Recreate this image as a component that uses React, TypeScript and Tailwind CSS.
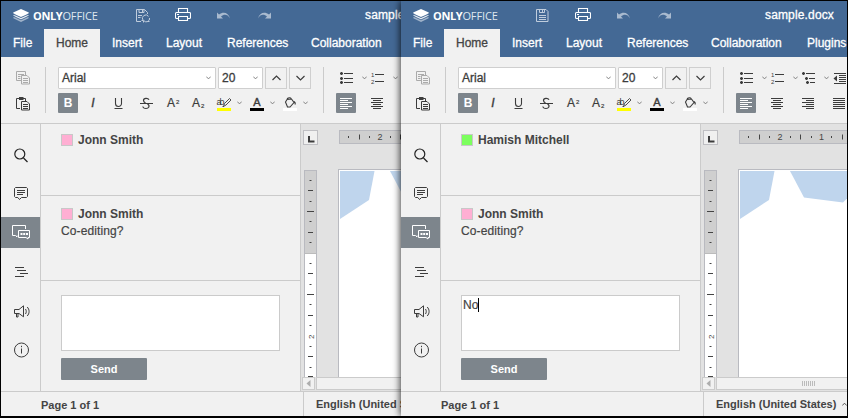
import type { ReactNode } from "react";

function Svg({ w, h, className = "", children }: { w: number; h: number; className?: string; children: ReactNode }) {
  return (
    <svg width={w} height={h} viewBox={`0 0 ${w} ${h}`} fill="none" stroke="currentColor" className={`block shrink-0 ${className}`}>
      {children}
    </svg>
  );
}

const Caret = () => (
  <Svg w={5} h={4} className="text-[#777]">
    <path d="M.3.6 2.5 2.9 4.7.6" strokeWidth=".9" />
  </Svg>
);

function Logo() {
  return (
    <div className="ml-3 flex w-[87px] shrink-0 items-center gap-1">
      <Svg w={16} h={13}>
        <g stroke="none" fill="#fff">
          <path d="M8 4.5 15.6 8.3v1L8 12.9.4 9.3v-1z" opacity=".5" />
          <path d="M8 3 15.6 5.9v.9L8 10.2.4 6.8v-.9z" opacity=".75" />
          <path d="M8 5 15.8 3.6v.7L8 7.9.2 4.3v-.7z" />
          <path d="M8 0 15.8 3.6 8 7.2.2 3.6z" />
          <path d="M.4 4.7 8 8.1l7.6-3.4v.8L8 8.9.4 5.5zM.4 7.1 8 10.5l7.6-3.4v.7L8 11.2.4 7.8z" fill="#446995" />
        </g>
      </Svg>
      <div className="whitespace-nowrap font-['Open_Sans',sans-serif] text-[11px] leading-[13px] tracking-[-0.1px] text-white [-webkit-text-stroke:0px]">
        <span className="font-bold tracking-[-0.35px]">ONLY</span>
        <span className="text-[#dfe7f0]">OFFICE</span>
      </div>
    </div>
  );
}

function SaveIcon({ sync }: { sync: boolean }) {
  return (
    <Svg w={16} h={15} className="text-[#c0cddd]">
      {sync ? (
        <>
          <path d="M6 13.5H1.5V1.5h8l3 3V6M4 1.5v3h5v-3M7.5 2v2M3 7.5h4M3 9.5h2.500" />
          <path d="M8 12.200A3.200 3.200 0 0 1 13.500 8.400M14.500 10a3.200 3.200 0 0 1-5.500 2.800M12.500 13.500h2M8.500 14.500v-2h-2" />
        </>
      ) : (
        <>
          <path d="M1.500 1.500h9.500l2 2v10h-11.500zM4.500 1.500v3h5v-3M4 7.500h7M4 9.500h7M4 11.500h7" />
          <path d="M7.500 2v2" />
        </>
      )}
    </Svg>
  );
}

const PrintIcon = () => (
  <Svg w={16} h={14} className="text-white">
    <path d="M3.500 4V.5h9V4M3 10.500H1.500a1 1 0 0 1-1-1v-4a1 1 0 0 1 1-1h13a1 1 0 0 1 1 1v4a1 1 0 0 1-1 1H13M3.500 8.500h9v4h-9zM2 6.500h2" strokeWidth="1.100" />
  </Svg>
);

const UndoIcon = ({ flip = false }: { flip?: boolean }) => (
  <Svg w={14} h={8} className={flip ? "-scale-x-100 text-[#a9bacf]" : "text-[#a9bacf]"}>
    <path d="M0 .5v6h6L4 4.500C7 2 10.500 2 13 6.500 11.500.8 6.500-.8 2 2.500z" fill="currentColor" stroke="none" />
  </Svg>
);

const CopyIcon = () => (
  <Svg w={15} h={14} className="text-[#aaa]">
    <path d="M5 9.500H.5v-9h9V4M2 3.500h6M2 5.500h2.500M2 7.500h2.500" />
    <path d="M5.500 4.500h5.500l2.500 2.500v6h-8zM7 7.500h5M7 9.500h5M7 11.500h5" />
  </Svg>
);

const PasteIcon = () => (
  <Svg w={15} h={14} className="text-[#3c3c3c]">
    <path d="M4 11.500H.5v-10h9V4M5.500 4.500h5.500l2.500 2.500v6h-8zM7 7.500h5M7 9.500h5M7 11.500h5" />
    <path d="M3 1.500h4.500" strokeWidth="3" />
  </Svg>
);

const Bullets = () => (
  <Svg w={13} h={13} className="text-[#3c3c3c]">
    <path d="M4 1.500h9M4 6.500h9M4 10.500h9" />
    <path d="M0 1.500h3M0 6.500h3M0 10.500h3M1.500 0v3M1.500 5v3M1.500 9v3" strokeWidth="1.600" />
  </Svg>
);

const Numbers = () => (
  <Svg w={13} h={13} className="text-[#3c3c3c]">
    <path d="M4 2.500h9M4 9.500h9" />
    <g fill="currentColor" stroke="none" fontFamily="Liberation Sans, sans-serif" fontSize="6">
      <text x="0" y="5">1</text>
      <text x="0" y="12">2</text>
    </g>
  </Svg>
);

const Multilevel = () => (
  <Svg w={13} h={13} className="text-[#3c3c3c]">
    <path d="M4 1.500h9M7 6.500h6M8 10.500h5" />
    <path d="M0 1.500h3M1.500 0v3M3 6.500h3M4.500 5v3M4 10.500h3M5.500 9v3" strokeWidth="1.500" />
  </Svg>
);

const Outdent = () => (
  <Svg w={13} h={13} className="text-[#3c3c3c]">
    <path d="M1 1.500h12M6 3.500h7M6 5.500h7M6 7.500h7M6 9.500h7M1 11.500h12" />
    <path d="M4 3.500v6L.5 6.500z" fill="currentColor" stroke="none" />
  </Svg>
);

function Lines({ d, className }: { d: string; className: string }) {
  return (
    <Svg w={12} h={12} className={className}>
      <path d={d} />
    </Svg>
  );
}

function Toolbar() {
  return (
    <div className="flex h-[66px] shrink-0 items-start pl-[15px] pt-[10px] text-[#3c3c3c]">
      <div className="flex w-[14px] shrink-0 flex-col gap-[12px] pt-1">
        <CopyIcon />
        <PasteIcon />
      </div>
      <div className="ml-[15px] h-[46px] w-px shrink-0 bg-[#cbcbcb]" />
      <div className="ml-[12px] flex w-[253px] shrink-0 flex-col gap-1">
        <div className="flex h-[22px] gap-[2px] text-[12px] [-webkit-text-stroke:0.3px]">
          <div className="flex w-[158px] items-center justify-between rounded-[1px] border border-[#cfcfcf] bg-white pl-[3px] pr-1">
            <span>Arial</span>
            <Caret />
          </div>
          <div className="flex w-[45px] items-center justify-between rounded-[1px] border border-[#cfcfcf] bg-white pl-[3px] pr-1">
            <span>20</span>
            <Caret />
          </div>
          <div className="flex w-[22px] items-center justify-center border border-[#cfcfcf]">
            <Svg w={9} h={6}><path d="M.5 5 4.500 1l4 4" strokeWidth="1.200" /></Svg>
          </div>
          <div className="flex w-[22px] items-center justify-center border border-[#cfcfcf]">
            <Svg w={9} h={6}><path d="M.5 1l4 4 4-4" strokeWidth="1.200" /></Svg>
          </div>
        </div>
        <div className="flex h-5 items-center text-[12px] leading-5">
          <div className="w-5 rounded-[1px] bg-[#7d858c] text-center font-bold text-white">B</div>
          <div className="ml-[5px] w-5 text-center italic [-webkit-text-stroke:0.4px]">I</div>
          <Svg w={20} h={20} className="ml-[6px]">
            <path d="M6.500 5v5.500a3 3 0 0 0 6 0V5M5.500 15.500h8" strokeWidth="1.100" />
          </Svg>
          <Svg w={20} h={20} className="ml-[7px]">
            <path d="M13 6.800C12 4.800 7.500 4.800 7.500 7.500c0 1 .5 1.700 2 2.500M11.500 11c3 2 1 4.500-1.500 4.500-2 0-3-1-3.200-2M4 10.500h13" strokeWidth="1.200" />
          </Svg>
          <div className="ml-[6px] w-5 pl-[5px] [-webkit-text-stroke:0.2px]">A<span className="ml-px inline-block -translate-y-[3px] text-[6px] leading-none">2</span></div>
          <div className="ml-[6px] w-5 pl-[4px] [-webkit-text-stroke:0.2px]">A<span className="ml-px inline-block translate-y-[1px] text-[6px] leading-none">2</span></div>
          <Svg w={20} h={20} className="ml-[6px]">
            <text x="2.500" y="12" fill="currentColor" stroke="none" fontSize="9" fontFamily="Liberation Sans, sans-serif" textLength="8">ab</text>
            <path d="M9.500 13.500l1-3 5-5 1.500 1.500-5 5zM10 13.500H8.500" strokeWidth=".9" />
            <path d="M3 16.500h14" stroke="#ff0" strokeWidth="3" />
          </Svg>
          <div className="ml-[3px]"><Caret /></div>
          <Svg w={20} h={20} className="ml-[5px]">
            <text x="10" y="13" textAnchor="middle" fill="currentColor" strokeWidth=".4" fontSize="11" fontFamily="Liberation Sans, sans-serif">A</text>
            <path d="M3 16.500h14" stroke="#000" strokeWidth="3" />
          </Svg>
          <div className="ml-[3px]"><Caret /></div>
          <Svg w={20} h={20} className="ml-[5px]">
            <path d="M5.500 9 7 6.500a2.500 2.500 0 0 1 4.500-.5l2.500 3.500-4 4.500h-2.500zM7 6.500 11.500 6M14 8.500c1 .5 1.500 1.500 1 3" strokeWidth="1.100" />
            <path d="M3 16.500h14" stroke="#fff" strokeWidth="3" />
          </Svg>
          <div className="ml-[3px]"><Caret /></div>
        </div>
      </div>
      <div className="ml-[12px] h-[46px] w-px shrink-0 bg-[#cbcbcb]" />
      <div className="ml-[12px] flex shrink-0 flex-col gap-1">
        <div className="flex h-[22px] items-center pl-1">
          <Bullets /><div className="ml-[9px] mr-1"><Caret /></div>
          <Numbers /><div className="ml-[9px] mr-1"><Caret /></div>
          <Multilevel /><div className="ml-[9px] mr-1"><Caret /></div>
          <Outdent />
        </div>
        <div className="flex h-5 items-center">
          <div className="flex h-5 w-5 items-center justify-center rounded-[1px] bg-[#7d858c]">
            <Lines className="text-white" d="M0 1.500h12M0 3.500h8M0 5.500h12M0 7.500h8M0 9.500h12M0 11.500h8" />
          </div>
          <Lines className="ml-[15px]" d="M0 1.500h12M2 3.500h8M0 5.500h12M2 7.500h8M0 9.500h12M2 11.500h8" />
          <Lines className="ml-[19px]" d="M0 1.500h12M4 3.500h8M0 5.500h12M4 7.500h8M0 9.500h12M4 11.500h8" />
          <Lines className="ml-[19px]" d="M0 1.500h12M0 3.500h12M0 5.500h12M0 7.500h12M0 9.500h12M0 11.500h12" />
        </div>
      </div>
    </div>
  );
}

function Sidebar() {
  return (
    <div className="flex w-10 shrink-0 flex-col border-r border-[#cbcbcb] pt-[15px] text-[#3c3c3c]">
      <div className="flex h-8 items-center pl-[13px]">
        <Svg w={14} h={15} className="text-[#222]"><circle cx="5.800" cy="6" r="5" strokeWidth="1.200" /><path d="M9.500 10l4 4" strokeWidth="1.300" /></Svg>
      </div>
      <div className="flex h-[46px] items-center pl-[13px]">
        <Svg w={14} h={14}><path d="M1.500.5h11l1 1v8l-1 1H7.500L5.500 12.500l-1.700-2H1.500l-1-1v-8zM3 3.500h8M3 5.500h8M3 7.500h6" /></Svg>
      </div>
      <div className="flex h-[31px] items-center bg-[#7d858c] pl-[11px] text-white">
        <Svg w={18} h={15}><path d="M5 10.500v1.500L3.500 10.500H.5V.5h13V4M6.500 5.500h11v7H16V14l-2-1.500H6.500z" /><path d="M8.500 9h2M11.200 9h2M14 9h2" strokeWidth="1.800" /></Svg>
      </div>
      <div className="flex h-12 items-center pl-[14px]">
        <Svg w={14} h={11}><path d="M0 .5h9M2 3.500h9M5 6.500h8M0 9.500h9" /></Svg>
      </div>
      <div className="flex h-[30px] items-center pl-[13px]">
        <Svg w={16} h={13}><path d="M.5 4.500H5L9.500.8v11L5 8.500H.5zM2.500 9v3h1.500V9M11.500 4c1 1.500 1 3.500 0 5M13.200 2c2.500 2.500 2.500 6.500 0 9" /></Svg>
      </div>
      <div className="flex h-[48px] items-center pl-[13px]">
        <Svg w={16} h={16}><circle cx="7.500" cy="8" r="7" /><path d="M7.500 6.500v5M7.500 3.800v1.400" /></Svg>
      </div>
    </div>
  );
}

function User({ name, pink = true }: { name: string; pink?: boolean }) {
  return (
    <div className="flex h-[14px] items-center gap-[5px] font-bold">
      <span className={`h-3 w-3 border border-[#c8c8c8] ${pink ? "bg-[#ffafd3]" : "bg-[#7cff5e]"}`} />
      {name}
    </div>
  );
}

function Chat({ other, draft }: { other: boolean; draft: string }) {
  return (
    <div className="flex w-[260px] shrink-0 flex-col border-r border-[#cbcbcb] text-[12px] leading-[14px] text-[#444]">
      <div className="h-[72px] shrink-0 border-b border-[#cbcbcb] pl-5 pt-[9px]">
        <User name={other ? "Hamish Mitchell" : "Jonn Smith"} pink={!other} />
      </div>
      <div className="h-[85px] shrink-0 border-b border-[#cbcbcb] pl-5 pt-[11px]">
        <User name="Jonn Smith" />
        <p className="pt-[3px] tracking-[0.1px] [-webkit-text-stroke:0.2px]">Co-editing?</p>
      </div>
      <div className="pl-5 pt-[14px]">
        <div className="flex h-14 w-[219px] items-start border border-[#cbcbcb] bg-white pl-px pt-[2px] [-webkit-text-stroke:0.2px]">
          {draft}
          {draft && <span className="h-[14px] w-px bg-black" />}
        </div>
        <div className="mt-[7px] h-[22px] w-[86px] rounded-[1px] bg-[#7d858c] text-center text-[11px] font-bold leading-[22px] text-white">Send</div>
      </div>
    </div>
  );
}

function Editor() {
  return (
    <div className="flex min-w-0 flex-1 flex-col overflow-hidden bg-[#e2e2e2]">
      <div className="flex h-[253px] shrink-0">
        <div className="flex w-4 shrink-0 flex-col pl-[2px] pt-[6px]">
          <div className="h-[15px] w-[15px] border border-[#bfbfc3] bg-[#f0f0f0]">
            <Svg w={13} h={13} className="text-[#3c3c3c]"><path d="M5 5v5.500h5.500" strokeWidth="2" /></Svg>
          </div>
          <div className="ml-px mt-[25px] flex w-[13px] flex-1 flex-col border border-b-0 border-[#b9bac0] bg-white">
            <Svg w={11} h={206} className="text-[#444]">
              <rect x="0" y="0" width="11" height="83" fill="#cfcfcf" stroke="none" />
              <path d="M0 82.500h11" stroke="#bbb" />
              <path d="M4.500 9.500h2M3 19.500h5M4.500 30.500h2M2 40.500h7M4.500 50.500h2M3 61.500h5M4.500 71.500h2M4.500 92.500h2M3 102.500h5M4.500 113.500h2M2 123.500h7M4.500 133.500h2M3 144.500h5M4.500 154.500h2M4.500 175.500h2M3 185.500h5M4.500 196.500h2M3 205.500h5" />
              <text transform="translate(8.500 168) rotate(-90)" fontSize="8" fill="#444" stroke="none" fontFamily="Liberation Sans, sans-serif">2</text>
            </Svg>
          </div>
        </div>
        <div className="ml-[21px] flex min-w-0 flex-1 flex-col pt-[6px]">
          <div className="ml-px h-[14px] shrink-0 overflow-hidden border border-r-0 border-[#b9bac0] bg-[#cfcfcf]">
            <Svg w={108} h={12} className="text-[#444]">
              <path d="M8.500 5v2M19.500 3.500v5M29.500 5v2M50.500 5v2M60.500 3.500v5M71.500 5v2M91.500 5v2M102.500 3.500v5" />
              <g fontSize="9" fill="currentColor" stroke="none" fontFamily="Liberation Sans, sans-serif"><text x="37.500" y="9">2</text><text x="79" y="9">1</text></g>
            </Svg>
          </div>
          <div className="mt-[25px] flex-1 overflow-hidden border-l border-t border-[#b9bac0] bg-white pl-px pt-px">
            <Svg w={108} h={50}>
              <g fill="#bfd5ed" stroke="none"><path d="M0 0h34.500l-5.500 29L0 48z" /><path d="M50 0h58v26.500l-5 5-39-5z" /></g>
            </Svg>
          </div>
        </div>
      </div>
      <div className="flex h-[13px] shrink-0 gap-px pl-px">
        <div className="flex w-[13px] shrink-0 items-center justify-center border border-[#cbcbcb] bg-[#f1f1f1]">
          <Svg w={5} h={7}><path d="M4.500 0v7L.5 3.500z" fill="#adadad" stroke="none" /></Svg>
        </div>
        <div className="flex w-[986px] shrink-0 items-center border border-[#cbcbcb] bg-[#f1f1f1] pl-[85px]">
          <Svg w={13} h={5}><path d="M.5 0v5M2.500 0v5M4.500 0v5M6.500 0v5M8.500 0v5M10.500 0v5M12.500 0v5" stroke="#bbb" /></Svg>
        </div>
      </div>
    </div>
  );
}

function EditorWindow({ second = false }: { second?: boolean }) {
  return (
    <div className={second ? "relative z-10 flex min-w-0 flex-1 flex-col bg-[#f1f1f1] shadow-[-1px_0_7px_rgba(0,0,0,0.75)]" : "flex w-[400px] shrink-0 flex-col overflow-hidden bg-[#f1f1f1]"}>
      <div className="flex min-h-0 w-full flex-1 flex-col overflow-hidden">
        <header className="shrink-0 bg-[#446995] text-[12px] text-white [-webkit-text-stroke:0.3px]">
          <div className="flex h-7 items-center whitespace-nowrap">
            <Logo />
            <div className="ml-[35px] w-10 shrink-0"><SaveIcon sync={!second} /></div>
            <div className="w-[42px] shrink-0"><PrintIcon /></div>
            <div className="w-10 shrink-0 pt-[2px]"><UndoIcon /></div>
            <div className="flex w-[14px] shrink-0 pt-[2px]"><UndoIcon flip /></div>
            <span className="ml-[94px] shrink-0 tracking-[0.15px]">sample.docx</span>
          </div>
          <nav className="flex h-7 whitespace-nowrap leading-[28px]">
            <span className="w-[43px] shrink-0 pl-3">File</span>
            <span className="w-14 shrink-0 bg-[#f1f1f1] text-center text-[#444]">Home</span>
            <span className="w-[54px] shrink-0 pl-3">Insert</span>
            <span className="w-[61px] shrink-0 pl-3">Layout</span>
            <span className="w-[84px] shrink-0 pl-3">References</span>
            <span className="w-24 shrink-0 pl-3">Collaboration</span>
            <span className="shrink-0 pl-3">Plugins</span>
          </nav>
        </header>
        <Toolbar />
        <main className="flex h-[268px] shrink-0 border-t border-[#cbcbcb]">
          <Sidebar />
          <Chat other={second} draft={second ? "No" : ""} />
          <Editor />
        </main>
        <footer className="flex min-h-0 flex-1 whitespace-nowrap border-t border-[#cbcbcb] text-[11px] font-bold leading-[25px] text-[#444]">
          <span className="w-[302px] shrink-0 pl-10 pt-px">Page 1 of 1</span>
          <span className="flex shrink-0 items-center gap-[6px] border-l border-[#cbcbcb] pl-3">
            English (United States)
            <Svg w={5} h={4}><path d="M.3 3.500 2.500 1.200l2.200 2.300" strokeWidth=".9" /></Svg>
          </span>
        </footer>
      </div>
    </div>
  );
}

export default function App() {
  return (
    <div className="flex h-[418px] w-[848px] overflow-hidden border border-b-2 border-black bg-black font-['Liberation_Sans',Arial,sans-serif]">
      <EditorWindow />
      <EditorWindow second />
    </div>
  );
}
